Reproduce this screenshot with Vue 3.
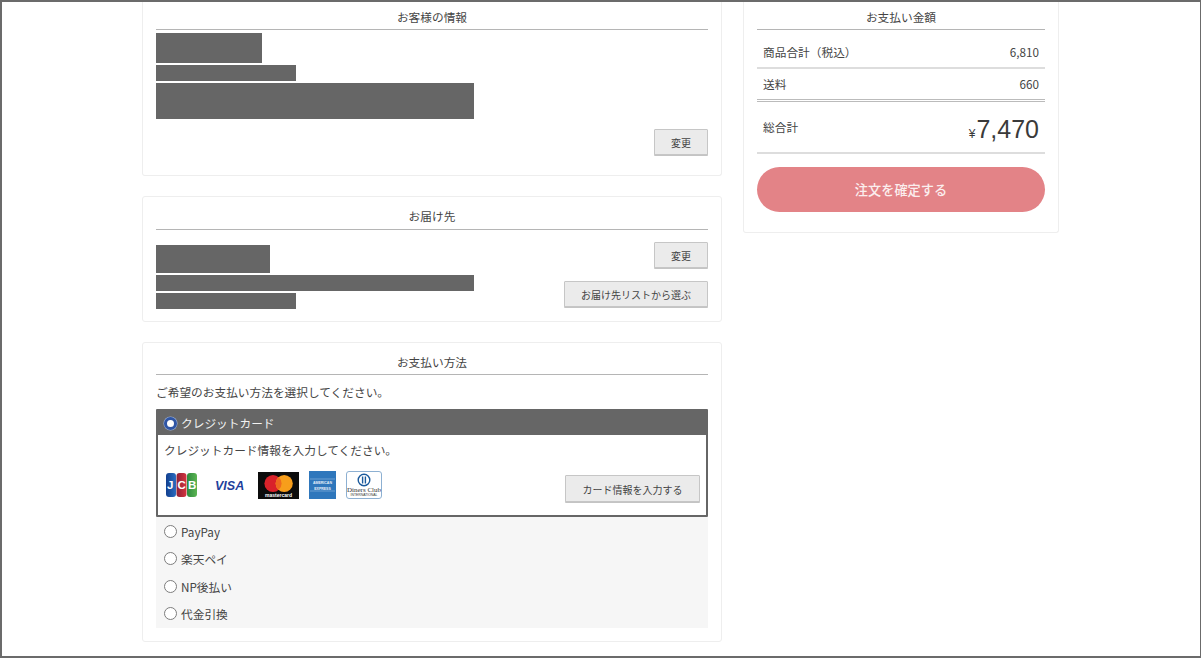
<script setup>
const otherMethods = [
  { name: 'PayPay' },
  { name: '楽天ペイ' },
  { name: 'NP後払い' },
  { name: '代金引換' },
]
</script>

<template>
  <div class="frame">
    <div class="columns">
      <div class="left">
        <section class="card first card-customer">
          <h2 class="title first-title">お客様の情報</h2>
          <div class="bars">
            <div class="bar b-name"></div>
            <div class="bar b-phone"></div>
            <div class="bar b-addr"></div>
          </div>
          <div class="right-btn"><button class="btn btn-small">変更</button></div>
        </section>

        <section class="card card-dest">
          <h2 class="title">お届け先</h2>
          <div class="dest-body">
            <div class="bars dest-bars">
              <div class="bar b-dname"></div>
              <div class="bar b-daddr"></div>
              <div class="bar b-dphone"></div>
            </div>
            <div class="dest-btns">
              <button class="btn btn-small">変更</button>
              <button class="btn btn-list">お届け先リストから選ぶ</button>
            </div>
          </div>
        </section>

        <section class="card card-pay">
          <h2 class="title pay-title">お支払い方法</h2>
          <p class="lead">ご希望のお支払い方法を選択してください。</p>
          <div class="credit">
            <div class="credit-head">
              <span class="radio on"></span>
              <span>クレジットカード</span>
            </div>
            <div class="credit-body">
              <p class="credit-text">クレジットカード情報を入力してください。</p>
              <div class="credit-row">
                <div class="logos">
                  <svg class="jcb" width="31" height="24" viewBox="0 0 31 24">
                    <defs>
                      <linearGradient id="jb" x1="0" x2="1" y1="0" y2="0"><stop offset="0" stop-color="#123f8f"/><stop offset="1" stop-color="#2a6cc0"/></linearGradient>
                      <linearGradient id="jr" x1="0" x2="1" y1="0" y2="0"><stop offset="0" stop-color="#8e2136"/><stop offset="1" stop-color="#d5353f"/></linearGradient>
                      <linearGradient id="jg" x1="0" x2="1" y1="0" y2="0"><stop offset="0" stop-color="#2d8a3e"/><stop offset="1" stop-color="#5cb452"/></linearGradient>
                    </defs>
                    <rect x="0" y="0" width="10" height="24" rx="3" fill="url(#jb)"/>
                    <rect x="10.5" y="0" width="10" height="24" rx="3" fill="url(#jr)"/>
                    <rect x="21" y="0" width="10" height="24" rx="3" fill="url(#jg)"/>
                    <text x="1" y="16" class="jcb-t">J</text>
                    <text x="11.5" y="16" class="jcb-t">C</text>
                    <text x="22" y="16" class="jcb-t">B</text>
                  </svg>
                  <svg class="visa" width="32" height="14" viewBox="0 0 32 14">
                    <text x="0" y="12" class="visa-t">VISA</text>
                  </svg>
                  <svg class="mc" width="41" height="27" viewBox="0 0 41 27">
                    <rect width="41" height="27" fill="#0c0c0c"/>
                    <circle cx="15" cy="11.5" r="8.6" fill="#d9222a"/>
                    <circle cx="26.2" cy="11.5" r="8.6" fill="#f79e1b"/>
                    <path d="M20.6 5a8.6 8.6 0 0 1 0 13 8.6 8.6 0 0 1 0-13z" fill="#ee6a1f"/>
                    <text x="20.5" y="25" class="mc-t">mastercard</text>
                  </svg>
                  <svg class="amex" width="27" height="28" viewBox="0 0 27 28">
                    <rect width="27" height="28" fill="#2f77bc"/>
                    <text x="13.5" y="13" class="amex-t">AMERICAN</text>
                    <text x="13.5" y="19" class="amex-t">EXPRESS</text>
                    <path d="M1 8h25M1 20h25" stroke="#a9cbe8" stroke-width=".5"/>
                  </svg>
                  <svg class="diners" width="36" height="28" viewBox="0 0 36 28">
                    <rect x=".5" y=".5" width="35" height="27" rx="2.5" fill="#fff" stroke="#8db0d2"/>
                    <circle cx="18" cy="9" r="5.8" fill="none" stroke="#1b5a9c" stroke-width="1.4"/>
                    <path d="M16.6 5.5v7M19.4 5.5v7" stroke="#1b5a9c" stroke-width="1.4"/>
                    <text x="18" y="20.5" class="din-t">Diners Club</text>
                    <text x="18" y="25" class="din-s">INTERNATIONAL</text>
                  </svg>
                </div>
                <button class="btn btn-card">カード情報を入力する</button>
              </div>
            </div>
          </div>
          <ul class="others">
            <li v-for="m in otherMethods" :key="m.name" class="other">
              <span class="radio"></span>
              <span>{{ m.name }}</span>
            </li>
          </ul>
        </section>
      </div>

      <aside class="card first summary">
        <h2 class="title first-title">お支払い金額</h2>
        <div class="row row-goods">
          <span>商品合計（税込）</span><span>6,810</span>
        </div>
        <div class="row row-ship">
          <span>送料</span><span>660</span>
        </div>
        <div class="row total">
          <span class="total-label">総合計</span>
          <span class="amount"><small>¥</small>7,470</span>
        </div>
        <button class="confirm">注文を確定する</button>
      </aside>
    </div>
  </div>
</template>

<style>
html, body { margin: 0; padding: 0; background: #fff; overflow: hidden; }
</style>

<style scoped>
.frame {
  box-sizing: border-box;
  width: 1201px;
  height: 658px;
  border: 2px solid #6b6b6b;
  border-right-width: 1px;
  overflow: hidden;
  background: #fff;
  color: #444;
  font-family: "Noto Sans CJK JP", "Noto Sans", sans-serif;
  font-size: 11.7px;
}
.columns {
  display: flex;
  align-items: flex-start;
  gap: 21px;
  padding-left: 140px;
}
.left {
  width: 580px;
  display: flex;
  flex-direction: column;
  gap: 20px;
}
.card {
  box-sizing: border-box;
  border: 1px solid #eee;
  border-radius: 3px;
  padding: 0 13px;
  background: #fff;
}
.card.first { border-top: 0; border-radius: 0 0 3px 3px; }
.title {
  margin: 0;
  height: 33px;
  box-sizing: border-box;
  padding-top: 11px;
  border-bottom: 1px solid #b5b5b5;
  text-align: center;
  font-size: 11.7px;
  font-weight: 400;
  line-height: 16px;
  color: #444;
}
.first-title { height: 28px; padding-top: 7px; }
.pay-title { height: 32px; }
.bars { display: flex; flex-direction: column; gap: 2px; }
.bar { background: #666; }
.card-customer { height: 174px; }
.card-customer .bars { margin-top: 3px; }
.b-name { width: 106px; height: 30px; }
.b-phone { width: 140px; height: 16px; }
.b-addr { width: 318px; height: 36px; }
.right-btn { display: flex; justify-content: flex-end; margin-top: 10px; }
.btn {
  box-sizing: border-box;
  margin: 0;
  padding: 2px 0 0;
  background: #ebebeb;
  border: 1px solid #c6c6c6;
  box-shadow: 0 1px 0 #c4c4c4;
  border-radius: 1px;
  color: #444;
  font-family: inherit;
  font-size: 10px;
  line-height: 14px;
}
.btn-small { width: 54px; height: 26px; }
.btn-list { width: 144px; height: 26px; }
.btn-card { width: 135px; height: 27px; margin-top: 4px; }
.card-dest { height: 126px; }
.dest-body { display: flex; justify-content: space-between; align-items: flex-start; }
.dest-bars { margin-top: 15px; }
.b-dname { width: 114px; height: 28px; }
.b-daddr { width: 318px; height: 16px; }
.b-dphone { width: 140px; height: 16px; }
.dest-btns {
  display: flex;
  flex-direction: column;
  align-items: flex-end;
  gap: 13px;
  margin-top: 12px;
}
.card-pay { height: 300px; }
.lead { margin: 8px 0 9px; line-height: 17px; color: #444; }
.credit { border: 2px solid #666; border-radius: 1px; }
.credit-head {
  height: 24px;
  box-sizing: border-box;
  padding-bottom: 2px;
  background: #666;
  color: #f2f2f2;
  display: flex;
  align-items: center;
  gap: 4px;
  padding-left: 6px;
}
.credit-body { background: #fff; height: 80px; padding: 6px 6px 0; box-sizing: border-box; }
.credit-text { margin: 0 0 13px; line-height: 17px; }
.credit-row { display: flex; justify-content: space-between; align-items: flex-start; height: 30px; }
.logos { display: flex; align-items: center; margin-left: 2px; }
.visa { margin-left: 18px; }
.mc { margin-left: 11px; }
.amex { margin-left: 10px; }
.diners { margin-left: 10px; }
.jcb-t { font: 700 11.5px "Liberation Sans", sans-serif; fill: #fff; }
.visa-t { font: italic 700 12.5px "Liberation Sans", sans-serif; fill: #1f3f9c; }
.mc-t { font: 600 5px "Liberation Sans", sans-serif; fill: #fff; text-anchor: middle; }
.amex-t { font: 700 3.5px "Liberation Sans", sans-serif; fill: #e8f1f9; text-anchor: middle; }
.din-t { font: 7px "Liberation Serif", serif; fill: #333; text-anchor: middle; }
.din-s { font: 3.4px "Liberation Sans", sans-serif; fill: #333; text-anchor: middle; }
.others {
  list-style: none;
  margin: 0;
  padding: 0.5px 0 0;
  background: #f6f6f6;
  height: 111px;
  box-sizing: border-box;
}
.other {
  height: 27.5px;
  display: flex;
  align-items: center;
  gap: 4px;
  padding-left: 8px;
}
.radio {
  box-sizing: border-box;
  width: 13px;
  height: 13px;
  border-radius: 50%;
  border: 1.5px solid #7d7d7d;
  background: #fff;
  flex: none;
}
.radio.on {
  border: 3px solid #2f55a4;
  background: #fff;
  box-shadow: 0 0 0 0.5px #9fb3d8;
  margin-top: 2px;
}
.summary { width: 316px; height: 231px; }
.row {
  display: flex;
  justify-content: space-between;
  align-items: center;
  box-sizing: border-box;
  padding: 0 6px;
  line-height: 16px;
}
.row-goods { height: 39px; padding-top: 6px; border-bottom: 2px solid #ddd; }
.row-ship { height: 33px; border-bottom: 3px double #bbb; }
.total { height: 52px; padding-top: 9px; border-bottom: 2px solid #ddd; }
.total-label { margin-bottom: 10px; }
.amount {
  font-family: "Liberation Sans", sans-serif;
  font-size: 25px;
  line-height: 30px;
  color: #3a3a3a;
}
.amount small { font-size: 12px; margin-right: 1px; }
.confirm {
  display: block;
  width: 100%;
  height: 45px;
  margin-top: 13px;
  padding: 0;
  border: 0;
  border-radius: 23px;
  background: #e38387;
  color: #fbeeee;
  font-family: inherit;
  font-size: 13.2px;
  font-weight: 500;
}
</style>
